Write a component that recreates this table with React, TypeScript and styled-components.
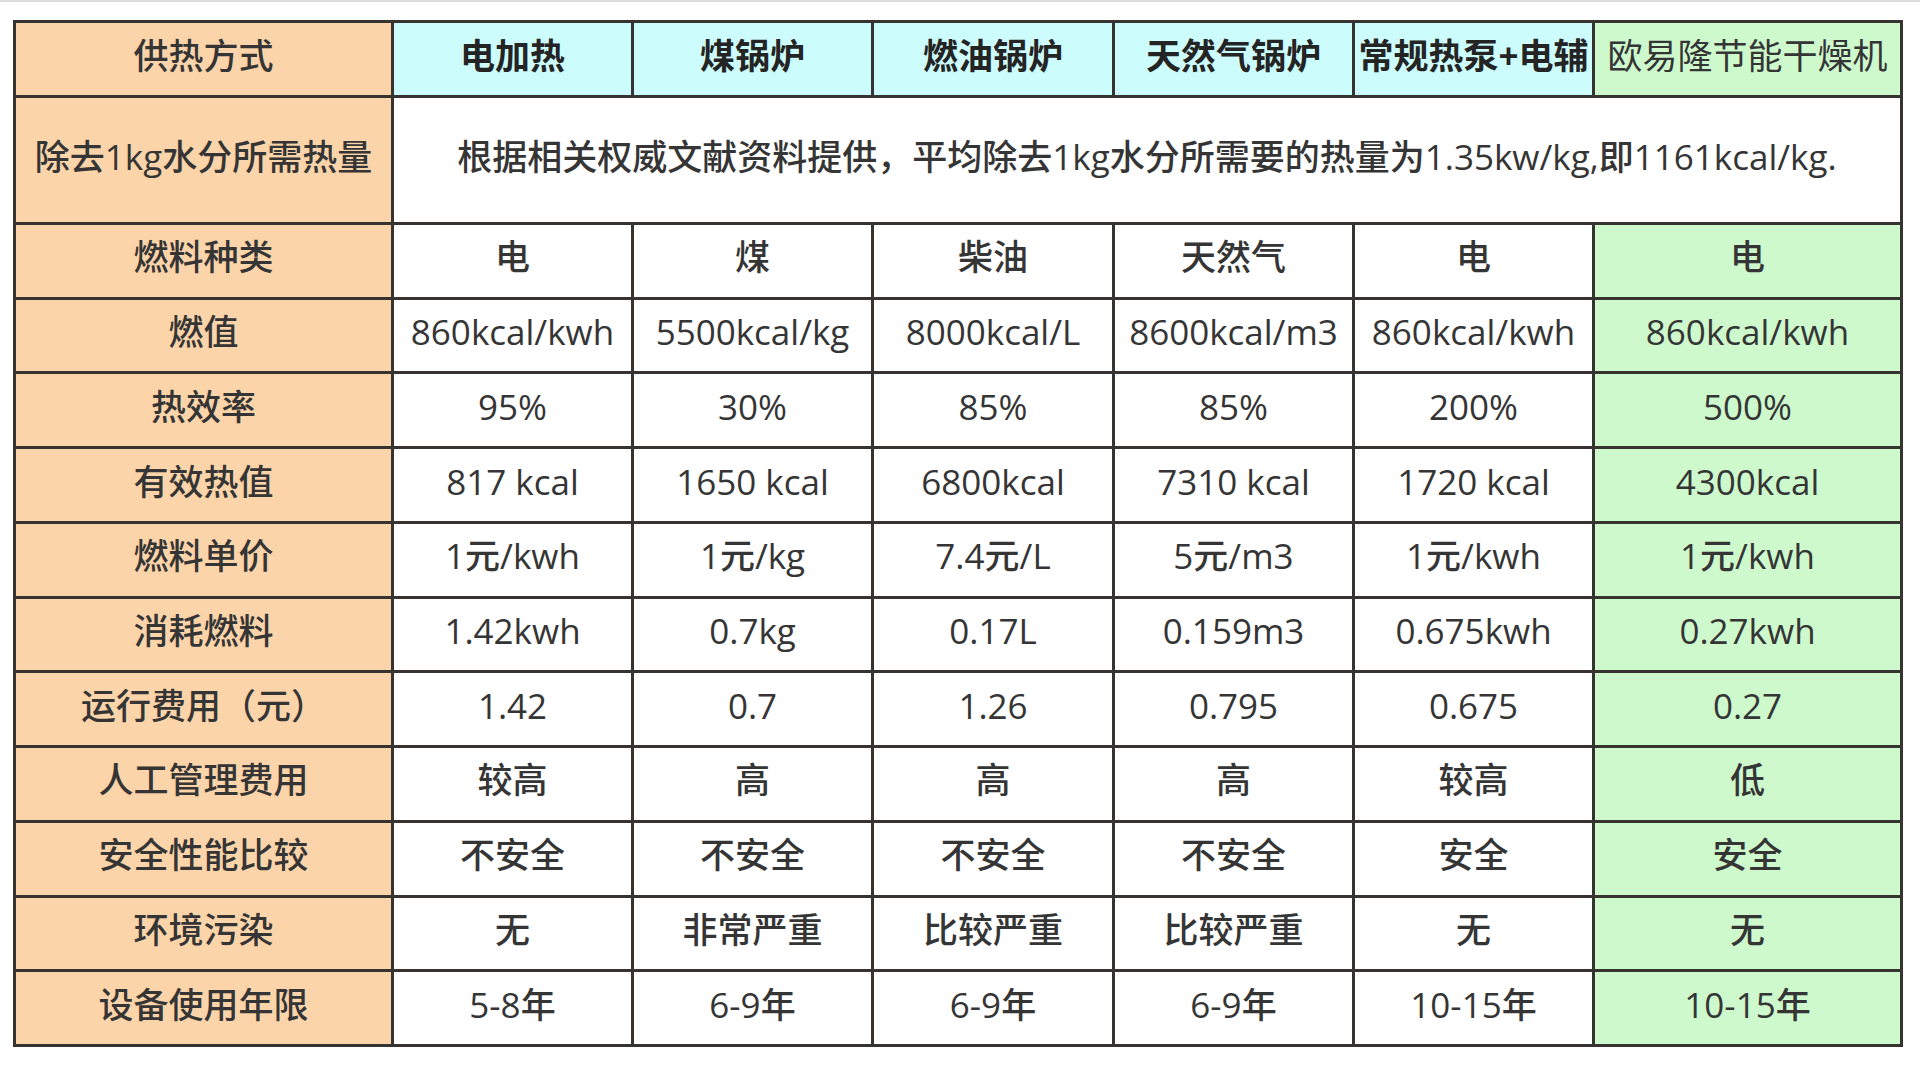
import React from "react";
import styled, { createGlobalStyle } from "styled-components";

const GlobalStyle = createGlobalStyle`
  html, body {
    margin: 0;
    padding: 0;
    background: #ffffff;
  }
  body {
    border-top: 2px solid #dcdcdc;
    font-family: "Open Sans", "Noto Sans CJK SC", sans-serif;
  }
`;

const Page = styled.div`
  padding: 18px 0 0 13px;
  width: 1920px;
  height: 1073px;
  box-sizing: border-box;
`;

const Grid = styled.div`
  display: grid;
  grid-template-columns: 375px 237px 237px 238px 237px 237px 305px;
  grid-template-rows: 72px 124px repeat(11, 1fr);
  gap: 3px;
  padding: 3px;
  width: 1890px;
  height: 1027px;
  box-sizing: border-box;
  background: #363330;
`;

type Tone = "label" | "head" | "green" | "plain";
type Weight = "light" | "normal" | "bold";

const tones: Record<Tone, string> = {
  label: "#fcd4a9",
  head: "#cdfcfc",
  green: "#cdf9cd",
  plain: "#ffffff",
};

const weights: Record<Weight, number> = {
  light: 400,
  normal: 500,
  bold: 700,
};

const Cell = styled.div<{ $tone: Tone; $weight?: Weight }>`
  display: flex;
  align-items: center;
  justify-content: center;
  padding-bottom: 7px;
  box-sizing: border-box;
  background: ${(p) => tones[p.$tone]};
  font-family: "Open Sans", "Noto Sans CJK SC", sans-serif;
  font-size: 35px;
  line-height: 1.2;
  font-weight: ${(p) => weights[p.$weight ?? "normal"]};
  color: ${(p) => (p.$weight === "bold" ? "#242424" : "#353535")};
  white-space: nowrap;
  overflow: hidden;
`;

const NoteCell = styled(Cell)`
  grid-column: span 6;
`;

const headers = ["电加热", "煤锅炉", "燃油锅炉", "天然气锅炉", "常规热泵+电辅"];

const rows: [string, string[]][] = [
  ["燃料种类", ["电", "煤", "柴油", "天然气", "电", "电"]],
  ["燃值", ["860kcal/kwh", "5500kcal/kg", "8000kcal/L", "8600kcal/m3", "860kcal/kwh", "860kcal/kwh"]],
  ["热效率", ["95%", "30%", "85%", "85%", "200%", "500%"]],
  ["有效热值", ["817 kcal", "1650 kcal", "6800kcal", "7310 kcal", "1720 kcal", "4300kcal"]],
  ["燃料单价", ["1元/kwh", "1元/kg", "7.4元/L", "5元/m3", "1元/kwh", "1元/kwh"]],
  ["消耗燃料", ["1.42kwh", "0.7kg", "0.17L", "0.159m3", "0.675kwh", "0.27kwh"]],
  ["运行费用（元）", ["1.42", "0.7", "1.26", "0.795", "0.675", "0.27"]],
  ["人工管理费用", ["较高", "高", "高", "高", "较高", "低"]],
  ["安全性能比较", ["不安全", "不安全", "不安全", "不安全", "安全", "安全"]],
  ["环境污染", ["无", "非常严重", "比较严重", "比较严重", "无", "无"]],
  ["设备使用年限", ["5-8年", "6-9年", "6-9年", "6-9年", "10-15年", "10-15年"]],
];

export default function App() {
  return (
    <>
      <GlobalStyle />
      <Page>
        <Grid>
          <Cell $tone="label">供热方式</Cell>
          {headers.map((h) => (
            <Cell key={h} $tone="head" $weight="bold">
              {h}
            </Cell>
          ))}
          <Cell $tone="green" $weight="light">
            欧易隆节能干燥机
          </Cell>

          <Cell $tone="label">除去1kg水分所需热量</Cell>
          <NoteCell $tone="plain">
            根据相关权威文献资料提供，平均除去1kg水分所需要的热量为1.35kw/kg,即1161kcal/kg.
          </NoteCell>

          {rows.map(([label, values]) => (
            <React.Fragment key={label}>
              <Cell $tone="label">{label}</Cell>
              {values.map((v, i) => (
                <Cell key={i} $tone={i === values.length - 1 ? "green" : "plain"}>
                  {v}
                </Cell>
              ))}
            </React.Fragment>
          ))}
        </Grid>
      </Page>
    </>
  );
}
